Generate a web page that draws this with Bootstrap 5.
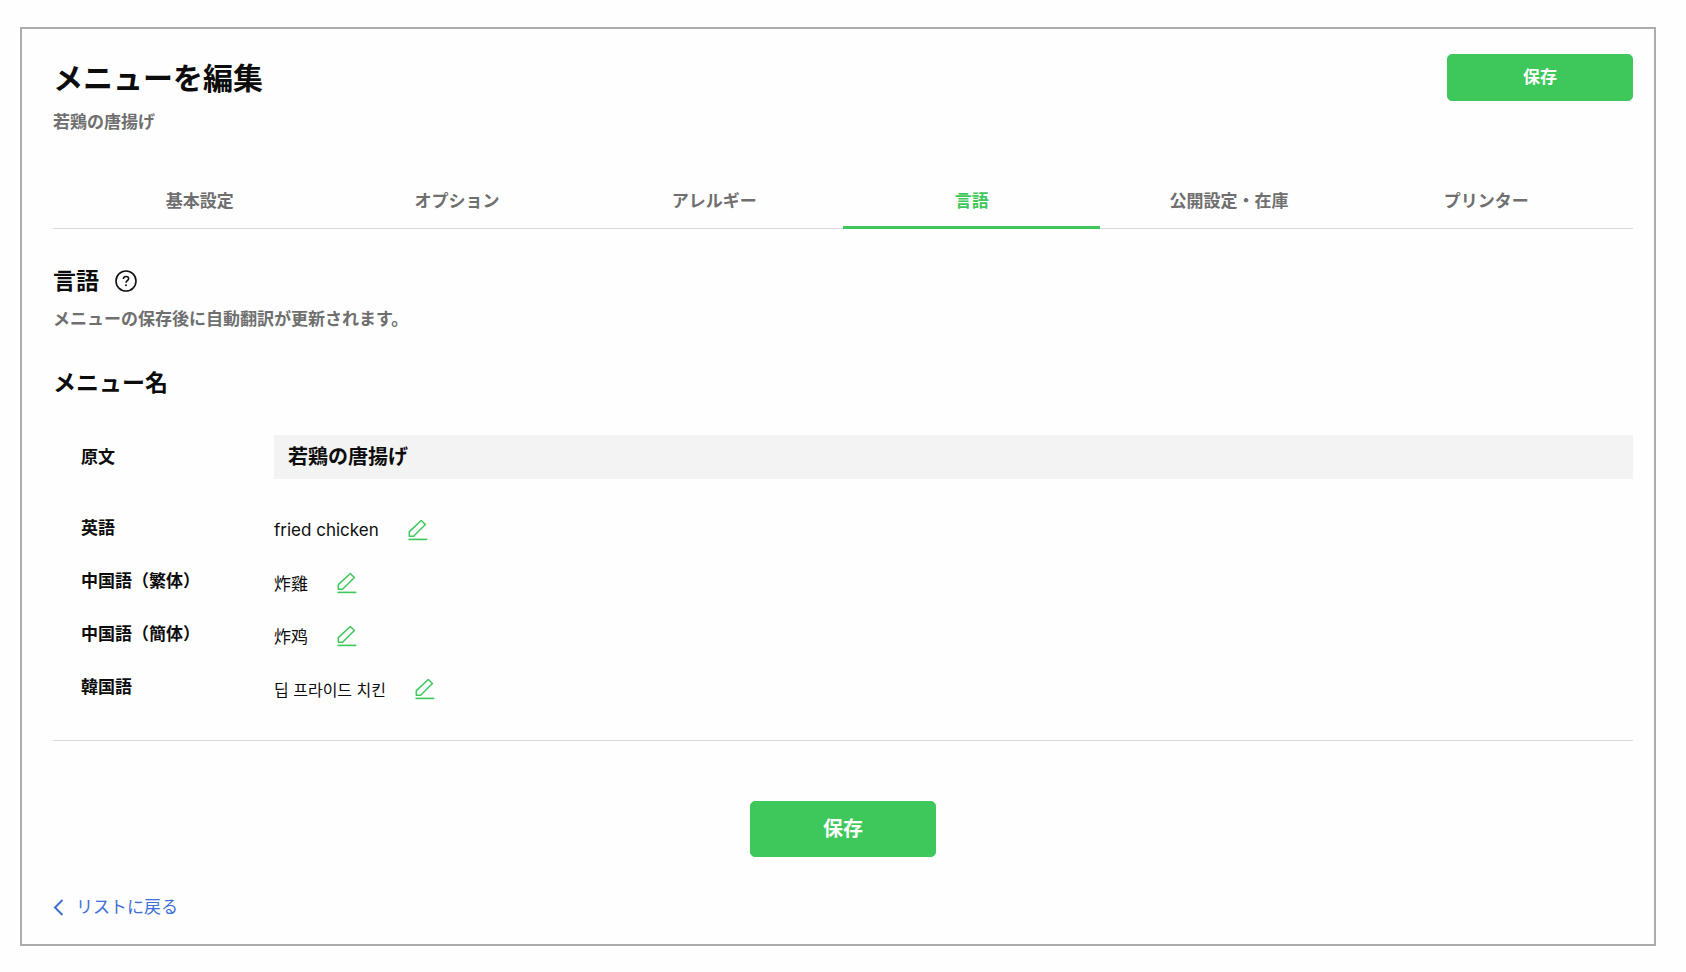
<!DOCTYPE html>
<html lang="ja">
<head>
<meta charset="utf-8">
<meta name="viewport" content="width=device-width, initial-scale=1">
<title>メニューを編集</title>
<link href="https://cdn.jsdelivr.net/npm/bootstrap@5.3.0/dist/css/bootstrap.min.css" rel="stylesheet">
<style>
  :root { --brand: #3ec75a; --muted: #6f6f6f; --rule: #dadada; }
  body { font-family: Inter, "Noto Sans CJK JP", sans-serif; font-size: 17px; line-height: 24px; color: #0c0c0c; background: #fefefe; }
  .edit-panel { margin: 27px 30px 27px 20px; padding: 25px 21px 22px 31px; border: 2px solid #acacac; }
  .page-title { font-size: 30px; line-height: 48px; font-weight: 700; }
  .section-title { font-size: 23px; line-height: 32px; font-weight: 700; }
  .text-soft { color: var(--muted); font-weight: 700; }
  .save-btn { --bs-btn-color: #fff; --bs-btn-bg: var(--brand); --bs-btn-border-color: var(--brand);
    --bs-btn-hover-color: #fff; --bs-btn-hover-bg: #35b44f; --bs-btn-hover-border-color: #35b44f;
    --bs-btn-active-color: #fff; --bs-btn-active-bg: #2fa548; --bs-btn-active-border-color: #2fa548;
    --bs-btn-border-radius: 5px; --bs-btn-font-size: 17px; --bs-btn-font-weight: 700; width: 186px; height: 47px; }
  .save-btn-large { --bs-btn-font-size: 20px; height: 56px; }
  .edit-tabs { margin-top: 41px; padding: 0 18px; border-bottom: 1px solid var(--rule); }
  .edit-tabs .nav-link { width: 100%; padding: 14px 0 13px; margin-bottom: -1px; color: var(--muted); font-weight: 700; border-bottom: 3px solid transparent; }
  .edit-tabs .nav-link.active { color: var(--brand); border-color: var(--brand); }
  .section-gap { margin-top: 36px; }
  .section-note { margin: 10px 0 0; }
  .name-list { margin: 36px 0 0; padding-bottom: 27px; border-bottom: 1px solid var(--rule); }
  .name-list dt { width: 221px; padding-left: 28px; font-weight: 700; }
  .name-list dd { margin: 0; }
  .lang-row { height: 53px; }
  .lang-row dd { padding-top: 4px; gap: 29px; }
  .source-row { margin-bottom: 22px; }
  .source-text { padding: 7px 14px; font-size: 20px; line-height: 30px; font-weight: 700; background: #f3f3f3; }
  .icon-btn { color: var(--brand); line-height: 0; }
  .form-actions { margin-top: 60px; }
  .back-link { color: #3d6fd6; margin-top: 38px; gap: 12px; }
  .zh-hant { font-family: "Noto Sans CJK TC", sans-serif; }
  .zh-hans { font-family: "Noto Sans CJK SC", sans-serif; }
  .ko-text { font-family: "Noto Sans CJK KR", sans-serif; font-size: 16px; }
</style>
</head>
<body>
<svg class="d-none">
  <symbol id="pencil" viewBox="0 0 20 22">
    <path d="M1.3 17.2V12.6L13.3 1.5L17.4 5.5L5.6 17.2Z" fill="none" stroke="currentColor" stroke-width="1.5" stroke-linejoin="round"/>
    <path d="M.5 20.4H19.3" stroke="currentColor" stroke-width="1.6"/>
  </symbol>
</svg>
<main class="edit-panel">
  <header class="d-flex justify-content-between align-items-start">
    <div>
      <h1 class="page-title mb-2">メニューを編集</h1>
      <p class="text-soft mb-0">若鶏の唐揚げ</p>
    </div>
    <button type="button" class="btn save-btn">保存</button>
  </header>

  <ul class="nav nav-fill nav-justified edit-tabs">
    <li class="nav-item"><a class="nav-link" href="#basic">基本設定</a></li>
    <li class="nav-item"><a class="nav-link" href="#options">オプション</a></li>
    <li class="nav-item"><a class="nav-link" href="#allergy">アレルギー</a></li>
    <li class="nav-item"><a class="nav-link active" aria-current="page" href="#language">言語</a></li>
    <li class="nav-item"><a class="nav-link" href="#stock">公開設定・在庫</a></li>
    <li class="nav-item"><a class="nav-link" href="#printer">プリンター</a></li>
  </ul>

  <section id="language">
    <div class="d-flex align-items-center section-gap">
      <h2 class="section-title mb-0">言語</h2>
      <button type="button" class="btn p-0 border-0 ms-3 lh-1" aria-label="ヘルプ">
        <svg width="22" height="22" viewBox="0 0 22 22" fill="none" stroke="#111" stroke-width="1.6" class="d-block">
          <circle cx="11" cy="11" r="10"/>
          <path d="M8.4 8.9C8.4 7.4 9.5 6.5 11 6.5S13.6 7.4 13.6 8.7C13.6 10.5 11 10.7 11 12.7"/>
          <circle cx="11" cy="15.2" r="1" fill="#111" stroke="none"/>
        </svg>
      </button>
    </div>
    <p class="text-soft section-note">メニューの保存後に自動翻訳が更新されます。</p>

    <h3 class="section-title section-gap mb-0">メニュー名</h3>
    <dl class="name-list">
      <div class="d-flex align-items-center source-row">
        <dt class="flex-shrink-0">原文</dt>
        <dd class="flex-grow-1 source-text">若鶏の唐揚げ</dd>
      </div>
      <div class="d-flex align-items-center lang-row">
        <dt class="flex-shrink-0">英語</dt>
        <dd class="d-flex align-items-center"><span lang="en">fried chicken</span><button type="button" class="btn p-0 border-0 icon-btn" aria-label="英語を編集"><svg width="20" height="22"><use href="#pencil"/></svg></button></dd>
      </div>
      <div class="d-flex align-items-center lang-row">
        <dt class="flex-shrink-0">中国語（繁体）</dt>
        <dd class="d-flex align-items-center"><span class="zh-hant" lang="zh-Hant">炸雞</span><button type="button" class="btn p-0 border-0 icon-btn" aria-label="中国語（繁体）を編集"><svg width="20" height="22"><use href="#pencil"/></svg></button></dd>
      </div>
      <div class="d-flex align-items-center lang-row">
        <dt class="flex-shrink-0">中国語（簡体）</dt>
        <dd class="d-flex align-items-center"><span class="zh-hans" lang="zh-Hans">炸鸡</span><button type="button" class="btn p-0 border-0 icon-btn" aria-label="中国語（簡体）を編集"><svg width="20" height="22"><use href="#pencil"/></svg></button></dd>
      </div>
      <div class="d-flex align-items-center lang-row">
        <dt class="flex-shrink-0">韓国語</dt>
        <dd class="d-flex align-items-center"><span class="ko-text" lang="ko">딥 프라이드 치킨</span><button type="button" class="btn p-0 border-0 icon-btn" aria-label="韓国語を編集"><svg width="20" height="22"><use href="#pencil"/></svg></button></dd>
      </div>
    </dl>
  </section>

  <div class="text-center form-actions">
    <button type="button" class="btn save-btn save-btn-large">保存</button>
  </div>
  <a class="back-link d-inline-flex align-items-center text-decoration-none" href="#list">
    <svg width="11" height="17" viewBox="0 0 11 17" fill="none" stroke="currentColor" stroke-width="2"><path d="M9.5 1L2 8.5L9.5 16"/></svg>
    リストに戻る
  </a>
</main>
<script src="https://cdn.jsdelivr.net/npm/bootstrap@5.3.0/dist/js/bootstrap.bundle.min.js"></script>
</body>
</html>
